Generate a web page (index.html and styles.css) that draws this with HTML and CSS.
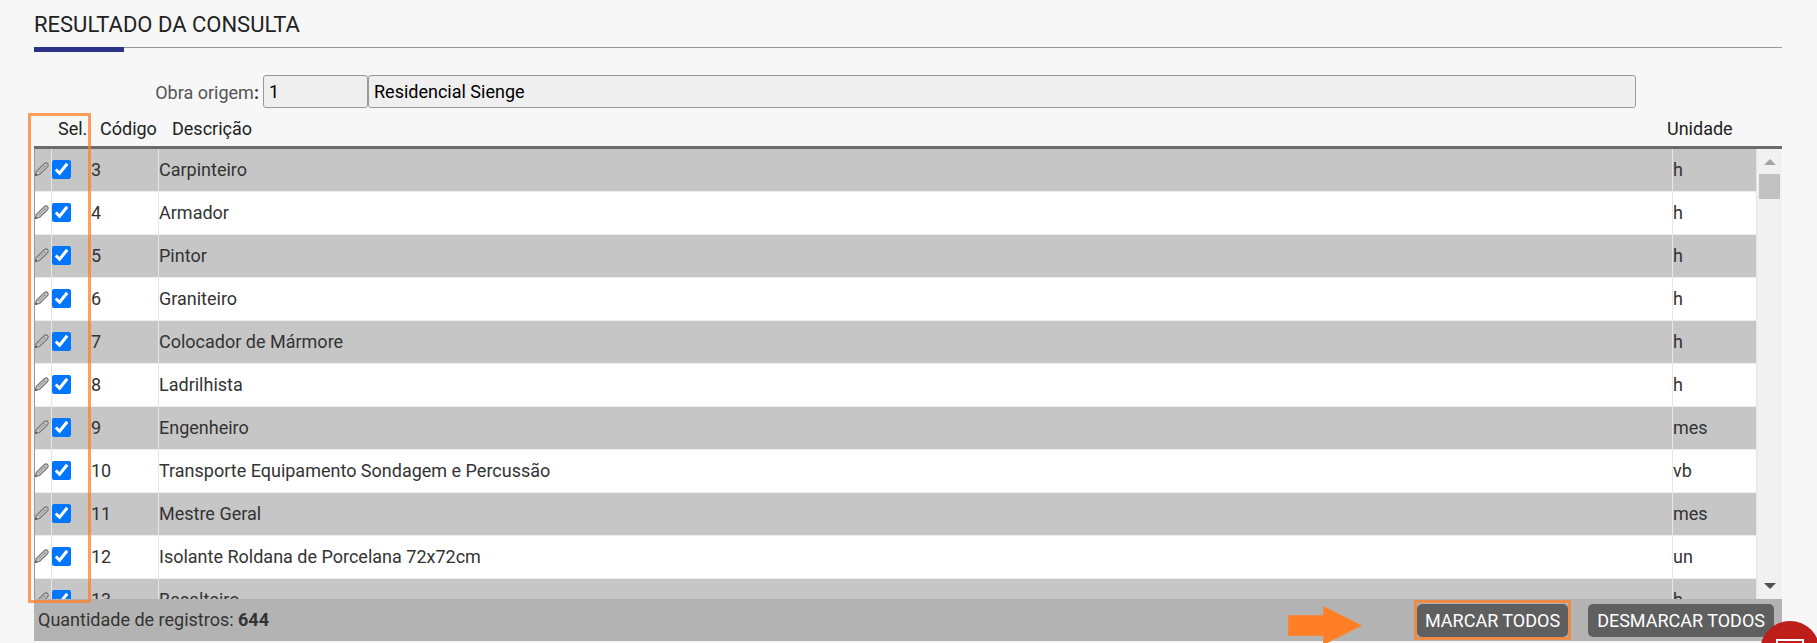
FILE: index.html
```html
<!DOCTYPE html>
<html lang="pt-BR">
<head>
  <meta charset="UTF-8">
  <meta name="viewport" content="width=device-width, initial-scale=1.0">
  <title>Resultado da Consulta</title>
  <link rel="stylesheet" href="styles.css">
</head>
<body>
  <svg width="0" height="0" class="sprite" aria-hidden="true">
    <symbol id="pencil" viewBox="0 0 14 14">
      <path d="M.5 13.3 L1.300 9.600 L9.200 1.700 Q11 .3 12.600 1.500 Q13.800 3.200 12.400 4.900 L4.500 12.500 Z" fill="#c8c8c8" stroke="#757575" stroke-width="1.200"/>
      <path d="M3.500 10.300 L9.800 4 M8.500 2.600 L11.500 5.600" fill="none" stroke="#919191"/>
      <path d="M0 14 L.7 11.500 L2.600 13.300 Z" fill="#555"/>
    </symbol>
  </svg>

  <main class="page">
    <h1 class="title">RESULTADO DA CONSULTA</h1>

    <div class="filter">
      <label for="obra">Obra origem<b>:</b></label>
      <input class="field code" id="obra" type="text" value="1" readonly>
      <input class="field name" type="text" value="Residencial Sienge" aria-label="Nome da obra" readonly>
    </div>

    <section class="result">
      <table class="head">
        <thead>
          <tr>
            <th class="h-edit"></th>
            <th class="h-sel">Sel.</th>
            <th class="h-code">Código</th>
            <th>Descrição</th>
            <th class="h-unit">Unidade</th>
          </tr>
        </thead>
      </table>

      <div class="scroll">
        <div class="rows">
          <table class="grid">
            <colgroup>
              <col class="c-edit">
              <col class="c-sel">
              <col class="c-code">
              <col>
              <col class="c-unit">
            </colgroup>
            <tbody id="items"></tbody>
          </table>
        </div>
        <div class="bar">
          <span class="up"></span>
          <span class="thumb"></span>
          <span class="down"></span>
        </div>
      </div>
      <div class="mark"></div>
    </section>

    <footer class="footer">
      <p class="count">Quantidade de registros: <b>644</b></p>
      <svg class="arrow" width="74" height="39" viewBox="0 0 74 39" aria-hidden="true">
        <path d="M0.500 9.500 H35.500 V0.500 L73.500 19.500 L35.500 38.500 V29.500 H0.500 Z" fill="#ff7f27" stroke="#f38a40"/>
      </svg>
      <button class="btn marked" type="button" id="markAll">MARCAR TODOS</button>
      <button class="btn" type="button" id="unmarkAll">DESMARCAR TODOS</button>
    </footer>
  </main>

  <button class="chat" type="button" aria-label="Chat">
    <svg width="28" height="24" viewBox="0 0 28 24">
      <path d="M1 1 H27 V19 H14 L8 23 V19 H1 Z M6 8 H22 M6 13 H22" fill="none" stroke="#fff" stroke-width="2"/>
    </svg>
  </button>

  <script src="script.js"></script>
</body>
</html>
```
FILE: styles.css
```css
* {
  box-sizing: border-box;
}

body {
  margin: 0;
  height: 100vh;
  overflow: hidden;
  background-color: #f7f7f7;
  color: #333;
  font-family: Roboto, sans-serif;
  font-size: 18px;
}

.sprite {
  position: absolute;
}

.page {
  height: 100%;
  display: flex;
  flex-direction: column;
  padding: 0 35px 2px 34px;
}

.title {
  margin: 0;
  height: 48px;
  flex-shrink: 0;
  border-bottom: 1px solid #999;
  color: #222;
  font-size: 22px;
  font-weight: 400;
  line-height: 49px;
}

.title::after {
  content: "";
  display: block;
  width: 90px;
  height: 5px;
  margin-top: -2px;
  background-color: #2a3288;
}

.filter {
  display: flex;
  align-items: center;
  flex-shrink: 0;
  margin-top: 27px;
  padding-right: 146px;
}

.filter label {
  width: 229px;
  padding: 2px 4px 0 0;
  color: #555;
  text-align: right;
}

.filter label b {
  color: #333;
  font-weight: 700;
}

.field {
  height: 33px;
  padding: 0 5px;
  border: 1px solid #999;
  border-radius: 3px;
  background-color: #efefef;
  color: #000;
  font: inherit;
}

.field.code {
  width: 105px;
}

.field.name {
  flex: 1;
}

.result {
  position: relative;
  flex: 1;
  min-height: 0;
  display: flex;
  flex-direction: column;
}

table {
  width: 100%;
  border-collapse: separate;
  border-spacing: 0;
  table-layout: fixed;
}

.head {
  border-bottom: 3px solid #6b6b6b;
}

.head th {
  height: 38px;
  padding: 3px 0 0;
  color: #222;
  font-weight: 400;
  text-align: left;
}

.h-edit {
  width: 24px;
}

.h-sel {
  width: 42px;
}

.h-code {
  width: 72px;
}

.h-unit {
  width: 115px;
}

.scroll {
  flex: 1;
  min-height: 0;
  display: flex;
  border-left: 1px solid #999;
}

.rows {
  flex: 1;
  overflow: hidden;
}

.grid td {
  height: 43px;
  padding: 0 0 2px;
  border-right: 1px solid #e6e6e6;
  border-bottom: 1px solid #eee;
  background-color: #fff;
}

.grid tr:nth-child(odd) td {
  background-color: #c6c6c6;
}

.grid td:nth-child(2) {
  border-right: 0;
}

.c-edit {
  width: 17px;
}

.c-sel {
  width: 39px;
}

.c-code {
  width: 68px;
}

.c-unit {
  width: 84px;
}

.grid svg,
.grid input {
  display: block;
}

.grid input {
  width: 19px;
  height: 19px;
  margin: 0;
}

.bar {
  width: 25px;
  display: flex;
  flex-direction: column;
  align-items: center;
  padding: 10px 0;
  background-color: #f1f1f1;
}

.up,
.down {
  border: 6px solid transparent;
  border-top-width: 0;
  border-bottom: 6px solid #a3a3a3;
}

.down {
  margin-top: auto;
  border-top: 6px solid #505050;
  border-bottom-width: 0;
}

.thumb {
  width: 21px;
  height: 25px;
  margin-top: 9px;
  background-color: #c1c1c1;
}

/* highlight around the selection column */
.mark {
  position: absolute;
  top: 5px;
  bottom: -4px;
  left: -6px;
  width: 63px;
  border: 3px solid rgba(255, 127, 39, 0.75);
  pointer-events: none;
}

.footer {
  display: flex;
  align-items: center;
  flex-shrink: 0;
  height: 42px;
  padding: 0 8px 0 4px;
  background-color: #b3b3b3;
}

.count {
  margin: 0 auto 0 0;
  padding-bottom: 2px;
}

.count b {
  font-weight: 700;
}

.arrow {
  margin: 11px 55px 0 0;
}

.btn {
  height: 33px;
  padding: 0 9px;
  border: 0;
  border-radius: 5px;
  background-color: #5f5f5f;
  color: #fff;
  font: inherit;
}

.btn.marked {
  position: relative;
  margin-right: 20px;
  padding: 0 8px;
}

.btn.marked::after {
  content: "";
  position: absolute;
  inset: -4px -3px -3px;
  border: 3px solid rgba(255, 127, 39, 0.75);
}

.chat {
  position: fixed;
  right: -3px;
  bottom: -38px;
  width: 60px;
  height: 60px;
  padding: 0;
  border: 0;
  border-radius: 50%;
  background-color: #bd1e1a;
}

.chat svg {
  display: block;
  margin: 0 auto;
}
```
FILE: script.js
```js
const items = [
  [3, "Carpinteiro", "h"],
  [4, "Armador", "h"],
  [5, "Pintor", "h"],
  [6, "Graniteiro", "h"],
  [7, "Colocador de Mármore", "h"],
  [8, "Ladrilhista", "h"],
  [9, "Engenheiro", "mes"],
  [10, "Transporte Equipamento Sondagem e Percussão", "vb"],
  [11, "Mestre Geral", "mes"],
  [12, "Isolante Roldana de Porcelana 72x72cm", "un"],
  [13, "Basalteiro", "h"]
];

const tbody = document.getElementById("items");

items.forEach(([code, name, unit]) => {
  const row = document.createElement("tr");
  row.innerHTML = `
    <td><svg width="14" height="14"><use href="#pencil"/></svg></td>
    <td><input type="checkbox" aria-label="Selecionar ${name}" checked></td>
    <td>${code}</td>
    <td>${name}</td>
    <td>${unit}</td>`;
  tbody.appendChild(row);
});

function setAll(checked) {
  tbody.querySelectorAll("input").forEach(box => {
    box.checked = checked;
  });
}

document.getElementById("markAll").addEventListener("click", () => setAll(true));
document.getElementById("unmarkAll").addEventListener("click", () => setAll(false));
```
